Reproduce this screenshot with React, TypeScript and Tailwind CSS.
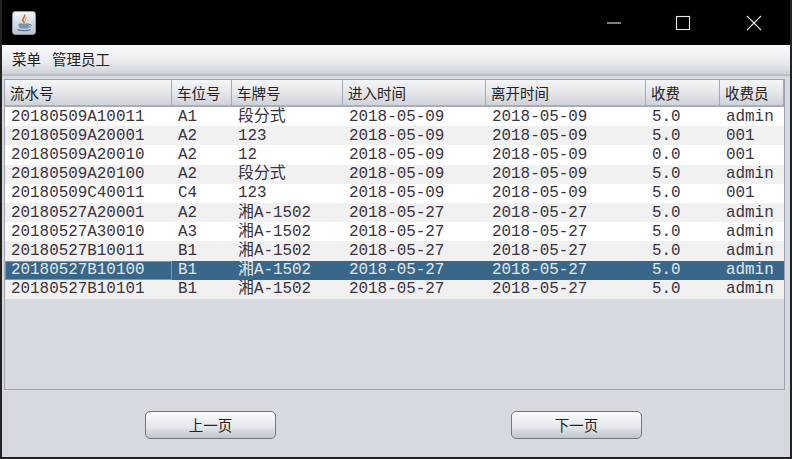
const columns = [
  { label: '流水号', width: 'w-[167px]' },
  { label: '车位号', width: 'w-[60px]' },
  { label: '车牌号', width: 'w-[111px]' },
  { label: '进入时间', width: 'w-[143px]' },
  { label: '离开时间', width: 'w-[160px]' },
  { label: '收费', width: 'w-[74px]' },
  { label: '收费员', width: 'w-[64px]' },
];

const rows = [
  ['20180509A10011', 'A1', '段分式', '2018-05-09', '2018-05-09', '5.0', 'admin'],
  ['20180509A20001', 'A2', '123', '2018-05-09', '2018-05-09', '5.0', '001'],
  ['20180509A20010', 'A2', '12', '2018-05-09', '2018-05-09', '0.0', '001'],
  ['20180509A20100', 'A2', '段分式', '2018-05-09', '2018-05-09', '5.0', 'admin'],
  ['20180509C40011', 'C4', '123', '2018-05-09', '2018-05-09', '5.0', '001'],
  ['20180527A20001', 'A2', '湘A-1502', '2018-05-27', '2018-05-27', '5.0', 'admin'],
  ['20180527A30010', 'A3', '湘A-1502', '2018-05-27', '2018-05-27', '5.0', 'admin'],
  ['20180527B10011', 'B1', '湘A-1502', '2018-05-27', '2018-05-27', '5.0', 'admin'],
  ['20180527B10100', 'B1', '湘A-1502', '2018-05-27', '2018-05-27', '5.0', 'admin'],
  ['20180527B10101', 'B1', '湘A-1502', '2018-05-27', '2018-05-27', '5.0', 'admin'],
];

const SELECTED = 8;

function JavaIcon() {
  return (
    <div className="flex h-[24px] w-[24px] items-center justify-center rounded-[3px] border border-[#8f9aa8] bg-gradient-to-b from-[#f4f6f9] to-[#b9c3d0]">
      <svg width="18" height="20" viewBox="0 0 18 20" fill="none">
        <path d="M9.500 1.500C11 4 7 5 8 7.500c.4 1 1.200 1.600 1.200 2.500" stroke="#d9682a" strokeWidth="1.600" />
        <path d="M11.500 4.500C10.500 6 10 6.500 10.500 8" stroke="#e5a15f" strokeWidth="1.100" />
        <path d="M3.500 10.500h10.500v2.500c0 1.500-1.500 2.500-3 2.500H6.500c-1.500 0-3-1-3-2.500z" fill="#7c93ad" />
        <path d="M14 11.500h1.500c1.200 0 1.200 2.500-1.800 2.800" stroke="#5d7896" />
        <path d="M2.500 16.500c3 1.500 10 1.500 13 0" stroke="#5d7896" strokeWidth="1.300" />
      </svg>
    </div>
  );
}

function WinButton({ width, children }: { width: string; children: React.ReactNode }) {
  return (
    <div className={`${width} flex h-[45px] items-center justify-center`}>
      <svg width="16" height="16" viewBox="0 0 16 16" fill="none" stroke="#e8e8e8" strokeWidth="1.100">
        {children}
      </svg>
    </div>
  );
}

function PageButton({ label }: { label: string }) {
  return (
    <button className="flex h-[28px] w-[131px] items-center justify-center rounded-[5px] border border-[#6f7780] bg-[linear-gradient(#fafbfc,#e6e9ed_55%,#bfc5cd)] text-[14.500px] text-[#222]">
      {label}
    </button>
  );
}

export default function App() {
  return (
    <div
      className="flex h-[459px] w-[792px] flex-col overflow-hidden border-x-[2px] border-b-[2px] border-[#222] bg-[#d6d9df] text-[#222]"
      style={{ fontFamily: '"Liberation Mono", "Noto Sans CJK SC", monospace' }}
    >
      <div className="flex h-[45px] shrink-0 items-center justify-between bg-black pl-[10px] pr-[1px]">
        <JavaIcon />
        <div className="flex">
          <WinButton width="w-[67px]">
            <path d="M1 8h14" />
          </WinButton>
          <WinButton width="w-[71px]">
            <rect x="1.500" y="1.500" width="13" height="13" />
          </WinButton>
          <WinButton width="w-[71px]">
            <path d="M1 1l14 14M15 1L1 15" />
          </WinButton>
        </div>
      </div>

      <div
        className="flex h-[31px] shrink-0 items-center gap-[11px] border-b-[2px] border-[#b9bdc4] bg-[linear-gradient(#fafafb,#e9ebef_60%,#cdd1d8)] pl-[10px] text-[14.500px] leading-none"
        style={{ fontFamily: '"Noto Sans CJK SC", sans-serif' }}
      >
        <span>菜单</span>
        <span>管理员工</span>
      </div>

      <div className="ml-[2px] mr-[5px] mt-[3px] h-[311px] shrink-0 border border-[#9ea4ad] bg-[#d6d9df]">
        <div className="flex h-[27px] border-b-[2px] border-[#a9aeb6] bg-[linear-gradient(#f4f5f7,#e3e5e9_55%,#cfd2d8)]">
          {columns.map((col) => (
            <div
              key={col.label}
              className={`${col.width} flex shrink-0 items-center border-r border-[#a5aab2] pl-[5px] pt-[1px] text-[14.500px] leading-none`}
              style={{ fontFamily: '"Noto Sans CJK SC", sans-serif' }}
            >
              {col.label}
            </div>
          ))}
        </div>
        {rows.map((row, i) => (
          <div
            key={row[0]}
            className={`flex h-[19.200px] text-[15.900px] leading-none ${
              i === SELECTED ? 'bg-[#39678a] text-[#e2e7eb]' : i % 2 === 0 ? 'bg-white text-[#3a3340]' : 'bg-[#f1f1f2] text-[#3a3340]'
            }`}
          >
            {row.map((cell, j) => (
              <div
                key={j}
                className={`${columns[j].width} flex shrink-0 items-center whitespace-nowrap pt-[2px] ${
                  i === SELECTED && j === 0 ? 'border border-[#6d9cc4] pl-[5px]' : 'pl-[6px]'
                }`}
              >
                {cell}
              </div>
            ))}
          </div>
        ))}
      </div>

      <div
        className="flex flex-1 items-start pl-[143px] pt-[21px]"
        style={{ fontFamily: '"Noto Sans CJK SC", sans-serif' }}
      >
        <PageButton label="上一页" />
        <div className="w-[235px]" />
        <PageButton label="下一页" />
      </div>
    </div>
  );
}
